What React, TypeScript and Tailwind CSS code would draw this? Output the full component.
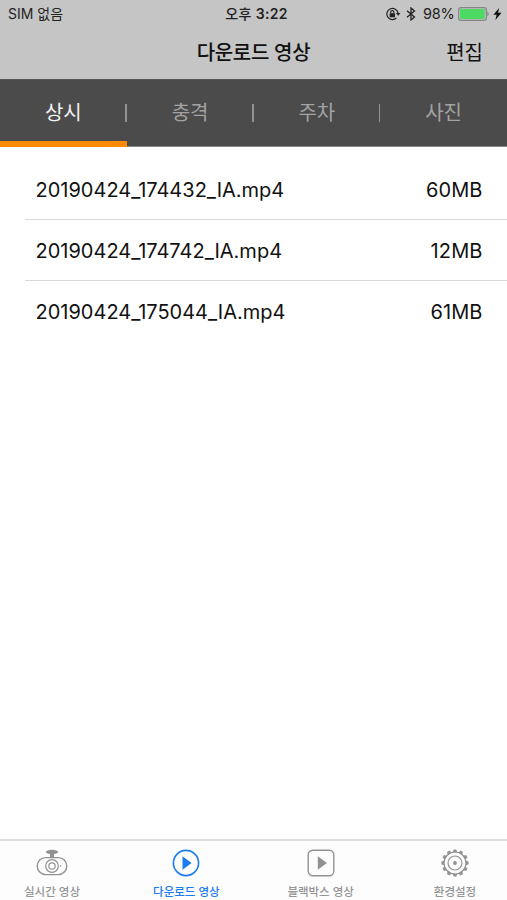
import type { ReactNode } from "react"
import clsx from "clsx"

const files = [
  { name: "20190424_174432_IA.mp4", size: "60MB" },
  { name: "20190424_174742_IA.mp4", size: "12MB" },
  { name: "20190424_175044_IA.mp4", size: "61MB" },
]

const categories = ["상시", "충격", "주차", "사진"]

function StatusBar() {
  return (
    <div className="relative flex h-[27px] items-center justify-between pl-[8px] pr-[5px] text-[14px] leading-[27px] text-[#222]">
      <span className="text-[14px]">SIM 없음</span>
      <span className="absolute left-1/2 top-0 -translate-x-1/2 ml-[3px] whitespace-nowrap font-medium text-[14px] tracking-[0.3px]">
        오후 <span className="font-semibold">3:22</span>
      </span>
      <div className="flex items-center">
        {/* Orientation lock */}
        <svg width="15" height="14" viewBox="0 0 15 14" fill="none" stroke="#222" className="mr-[5px]">
          <path d="M10.4 11A5.6 5.6 0 1 1 12 6.2" strokeWidth="1.2" />
          <path d="M9.9 6h4.6L12.2 8.8z" fill="#222" stroke="none" />
          <rect x="3.6" y="6.2" width="5.4" height="4.1" rx="0.5" fill="#222" stroke="none" />
          <path d="M4.7 6.4V5.2a1.6 1.6 0 0 1 3.2 0v1.2" strokeWidth="1.1" />
        </svg>
        <svg width="10" height="14" viewBox="0 0 10 14" fill="none" stroke="#222" strokeWidth="1.3" className="mr-[7px]">
          <path d="M1 3.8 8.5 10 5 13V1L8.5 4 1 10.2" />
        </svg>
        <span className="mr-[3px] w-[32px] whitespace-nowrap text-[14.5px] tracking-[-0.2px]">98%</span>
        <svg width="31" height="14" viewBox="0 0 31 14" className="mr-[4px]">
          <rect x="0.6" y="0.6" width="27.8" height="12.8" rx="2.4" fill="none" stroke="#858585" strokeWidth="1.2" />
          <rect x="2" y="2" width="24.8" height="10" rx="0.8" fill="#4cd964" />
          <path d="M29.4 4.6c1.6.5 1.6 4.3 0 4.8z" fill="#858585" />
        </svg>
        <svg width="9" height="12" viewBox="0 0 9 12">
          <path d="M6.2 0 0.4 6.8h3.2L2.4 12 8.6 4.8H5.1z" fill="#111" />
        </svg>
      </div>
    </div>
  )
}

function CameraIcon() {
  return (
    <svg width="32" height="28" viewBox="0 0 32 28" fill="none" stroke="#929292">
      <ellipse cx="16" cy="2.9" rx="6.2" ry="2.1" fill="#929292" stroke="none" />
      <path d="M14 4h4v4.6h-4z" fill="#929292" stroke="none" />
      <rect x="1.2" y="8.6" width="29.6" height="17" rx="8.5" strokeWidth="1.4" />
      <circle cx="16" cy="17" r="6.3" strokeWidth="1.2" />
      <circle cx="16" cy="17" r="3.2" strokeWidth="1.2" />
      <circle cx="24.7" cy="17" r="0.8" fill="#929292" stroke="none" />
    </svg>
  )
}

function PlayCircleIcon() {
  return (
    <svg width="28" height="28" viewBox="0 0 28 28" fill="none">
      <circle cx="14" cy="14" r="12.6" stroke="#1a7bf2" strokeWidth="1.6" />
      <path d="M10.5 7.2 19.6 14l-9.1 6.8z" fill="#1a7bf2" />
    </svg>
  )
}

function PlaySquareIcon() {
  return (
    <svg width="28" height="28" viewBox="0 0 28 28" fill="none">
      <rect x="1.2" y="1.2" width="25.6" height="25.6" rx="4.8" stroke="#929292" strokeWidth="1.4" />
      <path d="M10.8 7.2 20 14l-9.2 6.8z" fill="#929292" />
    </svg>
  )
}

function GearIcon() {
  const teeth = Array.from({ length: 12 }, (_, i) => i * 30)

  return (
    <svg width="28" height="28" viewBox="0 0 28 28" fill="none" stroke="#929292">
      <circle cx="14" cy="14" r="11" strokeWidth="1.2" />
      <circle cx="14" cy="14" r="7" strokeWidth="1.2" />
      <circle cx="14" cy="14" r="1.9" fill="#929292" stroke="none" />
      {teeth.map((angle) => (
        <path
          key={angle}
          d="M11.9 3.2 12.6 0.4h2.8L16.1 3.2z"
          fill="#929292"
          stroke="none"
          transform={`rotate(${angle} 14 14)`}
        />
      ))}
    </svg>
  )
}

function TabItem({ label, active, children }: { label: string; active?: boolean; children: ReactNode }) {
  return (
    <button
      className={clsx(
        "flex w-[104px] flex-col items-center pt-[8px] text-[11.5px] font-medium leading-[16px]",
        active ? "text-[#1a7bf2]" : "text-[#949494]"
      )}
    >
      {children}
      <span className="mt-[7px] whitespace-nowrap">{label}</span>
    </button>
  )
}

export default function App() {
  return (
    <div className="flex h-[900px] w-[507px] flex-col overflow-hidden bg-white font-[Inter,'Noto_Sans_CJK_KR',sans-serif] text-[#111]">
      <header className="h-[79px] shrink-0 bg-[#c5c5c5]">
        <StatusBar />
        <div className="grid h-[52px] grid-cols-3 items-center text-[20px]">
          <h1 className="col-start-2 text-center font-medium tracking-[-0.3px]">다운로드 영상</h1>
          <button className="mr-[24px] justify-self-end">편집</button>
        </div>
      </header>

      {/* Category tabs */}
      <nav className="flex h-[68px] shrink-0 border-b border-t border-b-[#8a8a8a] border-t-[#565656] bg-[#4b4b4b]">
        {categories.map((category, i) => (
          <button
            key={category}
            className={clsx(
              "relative flex flex-1 items-center justify-center pb-[1px] text-[20px]",
              i === 0 ? "text-[#f2f2f2]" : "text-[#a3a3a3]"
            )}
          >
            {category}
            {i === 0 && <span className="absolute bottom-[-1px] left-0 h-[6px] w-full bg-[#ff8a00]" />}
            {i < 3 && <span className="absolute right-0 top-[24px] h-[18px] w-[1.5px] bg-[#929292]" />}
          </button>
        ))}
      </nav>

      <ul className="flex-1 pt-[12px]">
        {files.map((file, i) => (
          <li
            key={file.name}
            className={clsx(
              "ml-[25px] flex h-[61px] items-center justify-between pl-[10.5px] pr-[24.5px] text-[20px]",
              i < files.length - 1 && "border-b border-[#d9d9d9] pt-[1px]"
            )}
          >
            <span>{file.name}</span>
            <span className="tracking-[0.1px]">{file.size}</span>
          </li>
        ))}
      </ul>

      <footer className="flex h-[61px] shrink-0 justify-between border-t-2 border-[#dedede] bg-[#fdfdfd]">
        <TabItem label="실시간 영상">
          <CameraIcon />
        </TabItem>
        <TabItem label="다운로드 영상" active>
          <PlayCircleIcon />
        </TabItem>
        <TabItem label="블랙박스 영상">
          <PlaySquareIcon />
        </TabItem>
        <TabItem label="환경설정">
          <GearIcon />
        </TabItem>
      </footer>
    </div>
  )
}
